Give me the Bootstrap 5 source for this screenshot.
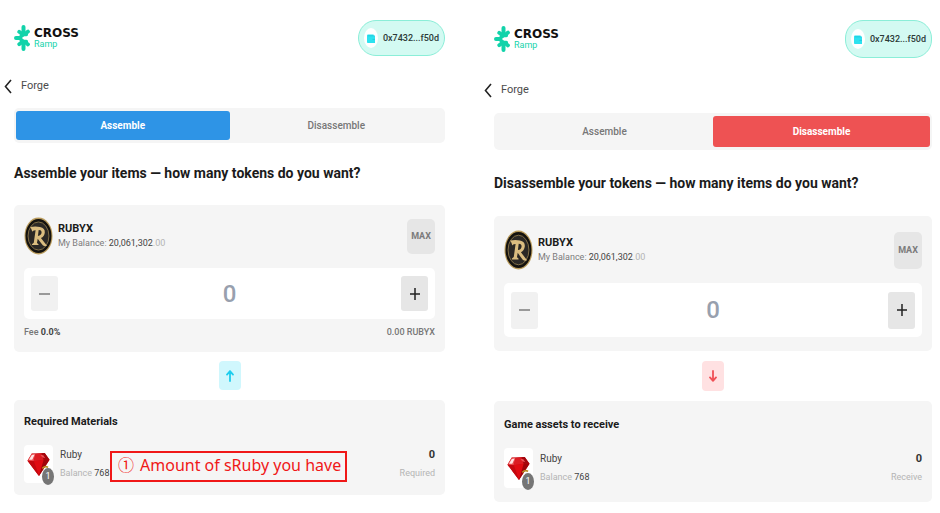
<!DOCTYPE html>
<html lang="en">
<head>
<meta charset="utf-8">
<meta name="viewport" content="width=device-width, initial-scale=1">
<title>CROSS Ramp – Forge</title>
<link href="https://cdn.jsdelivr.net/npm/bootstrap@5.3.0/dist/css/bootstrap.min.css" rel="stylesheet">
<style>
  body { font-family: Roboto, "Liberation Sans", sans-serif; font-size: 9px; line-height: 14px; color: #1b1b1b; background: #fff; }
  .forge-pair { display: grid; grid-template-columns: minmax(0, 445fr) minmax(0, 452fr); column-gap: 35px; padding-right: 8px; }
  .forge { --bar: 36px; --tabs: 35px; --token: 38px; --box: 51px; --step: 35px; --swap: 29px; --swap-gap: 9px; --above: 20px; --below: 12px; --lead: 19px; --drop: 21px; --pad: 12px; padding-top: 20px; }
  .forge-b { --bar: 38px; --tabs: 37px; --token: 40px; --box: 54px; --step: 37px; --swap: 30px; --swap-gap: 10px; --above: 22px; --below: 13px; --lead: 22px; --drop: 22px; --pad: 14px; }
  .forge-body { padding-left: 14px; }
  .topbar { height: var(--bar); }
  .brand-word { font: 700 12px/12px "DejaVu Sans", sans-serif; color: #111; }
  .brand-sub { font-size: 9px; line-height: 11px; color: #16d3ac; }
  .wallet { height: 100%; padding: 0 5px; gap: 5px; border: 1px solid #8beed8; border-radius: 18px; background: #d3faf2; color: #2c3a38; font-weight: 500; }
  .wallet-dot { width: 14px; height: 20px; border-radius: 50%; background: #fff; }
  .back { display: flex; margin: var(--above) 0 var(--below) 4px; height: 20px; gap: 9px; color: #4b4b4b; font-size: 11px; }
  .tabs { height: var(--tabs); padding: 3px 2px; border-radius: 5px; background: #f5f5f5; }
  .tabs button { flex: 1 1 0; border: 0; border-radius: 3px; background: transparent; color: #777; font-size: 10px; font-weight: 500; }
  .tabs .on-blue { background: #2e94e6; color: #fff; font-weight: 700; }
  .tabs .on-red { background: #ee5253; color: #fff; font-weight: 700; }
  .ask { font-size: 14px; line-height: 22px; font-weight: 700; margin: var(--lead) 0 var(--drop); white-space: nowrap; }
  .panel { background: #f5f5f5; border-radius: 5px; padding: var(--pad) 10px; }
  .token { height: var(--token); gap: 5px; }
  .coin { width: 29px; height: 100%; }
  .token-name { font-size: 11px; font-weight: 700; }
  .muted { color: #7c7c7c; }
  .faint { color: #b4b4b4; }
  .dark { color: #444; }
  .max { width: 28px; height: var(--step); border: 0; border-radius: 5px; background: #e6e6e6; color: #7b7b7b; font-size: 9px; font-weight: 700; padding: 0; }
  .amount { height: var(--box); margin-top: 13px; padding: 0 7px; border-radius: 5px; background: #fff; }
  .amount input { flex: 1 1 0; min-width: 0; height: 36px; border: 0; background: transparent; text-align: center; color: #98a0ae; font-size: 24px; font-weight: 500; padding: 0; }
  .step { width: 27px; height: var(--step); border: 0; border-radius: 3px; background: #e6e6e6; padding: 0; display: flex; align-items: center; justify-content: center; }
  .step:disabled { background: #f1f1f1; }
  .fee { margin-top: 5px; line-height: 16px; color: #777; font-weight: 500; }
  .swap { width: 22px; height: var(--swap); margin: var(--swap-gap) auto 10px; border: 0; border-radius: 4px; padding: 0; display: flex; align-items: center; justify-content: center; background: #d0f7fd; }
  .forge-b .swap { background: #ffe1e2; }
  .panel-title { font-size: 11px; line-height: 20px; font-weight: 700; margin: 0 0 13px; }
  .asset { height: var(--token); gap: 7px; }
  .tile { width: 29px; height: 100%; border-radius: 4px; background: #fff; }
  .count { left: 18px; bottom: -2px; width: 12px; height: 17px; border-radius: 50%; background: #757575; color: #fff; line-height: 17px; text-align: center; }
  .asset-text { line-height: 18px; }
  .asset-name { font-size: 10px; }
  .need { font-size: 11px; font-weight: 700; color: #333; }
  .callout { left: 86px; top: 6px; height: 31px; padding: 0 4px 4px 6px; gap: 6px; border: 2px solid #f01818; color: #f01818; font: 16px/20px "Noto Sans", "Noto Sans CJK KR", sans-serif; white-space: nowrap; }
</style>
<script src="https://cdn.jsdelivr.net/npm/bootstrap@5.3.0/dist/js/bootstrap.bundle.min.js"></script>
</head>
<body>
<svg class="d-none" aria-hidden="true">
  <symbol id="i-cross" viewBox="0 0 16 26" preserveAspectRatio="none">
    <g stroke="#12d3aa" stroke-linecap="round" stroke-linejoin="round" fill="none">
      <path d="M9.5 2v6M9.5 18v6M2 13H6" stroke-width="4"/>
      <path d="M5.2 6.8L9 9.6M14 6.6L11 9M5.2 19.2L9 16.4M14 19.4L11 17" stroke-width="3.8"/>
      <path d="M12.4 9.6H9.6Q6.6 10.4 6.6 13t3 3.4h2.8" stroke-width="3.4"/>
    </g>
  </symbol>
  <symbol id="i-wallet" viewBox="0 0 8 9" preserveAspectRatio="none">
    <path d="M1 .5h5.6v1.3H8V9H.8Q0 9 0 8V1.5Q0 .5 1 .5z" fill="#2de2ef"/><path d="M1 1.8h6.5M5.5 5.4H8" stroke="#19c6dc" stroke-width=".8"/>
  </symbol>
  <symbol id="i-coin" viewBox="0 0 30 40" preserveAspectRatio="none">
    <ellipse cx="15" cy="20" rx="14.5" ry="19.5" fill="#b99b5c"/>
    <ellipse cx="15" cy="20" rx="13.4" ry="18" fill="#14120f"/>
    <ellipse cx="15" cy="20" rx="10.8" ry="14.8" fill="#2b2825" stroke="#8f7a4d" stroke-width=".9"/>
    <path d="M6.5 10.5Q12 9.5 16.5 10.5Q22 11.5 21.5 16.5Q21 20.5 17.5 22.2L23.8 30.3Q20 31.8 18 28L14.2 22.8L13.4 27.3L15 28.6V29.6H8.2V28.6L10.1 27L12 14Q9 13.8 8.6 15.6Q7.8 12.5 6.5 10.5zM15.2 13.8L14.4 20Q18 19.4 18.2 16.4Q18.2 13.7 15.2 13.8z" fill="#dbbd80" fill-rule="evenodd"/>
  </symbol>
  <symbol id="i-ruby" viewBox="0 0 24 26" preserveAspectRatio="none">
    <path d="M5 1.5L18.5 1L23.5 8L12.5 25L.5 9z" fill="#c50d14"/>
    <path d="M5 1.5L9 2L7 9.5L.5 9z" fill="#e9474b"/><path d="M5 3L8 2.5L5.5 8L2 8z" fill="#ffe3e3"/>
    <path d="M9 2L15 1.2L17.5 8L7 9.5z" fill="#dc1b22"/><path d="M15 1.2L18.5 1L23.5 8L17.5 8z" fill="#a3060d"/>
    <path d="M7 9.5L17.5 8L12.5 25z" fill="#e00b12"/><path d="M17.5 8L23.5 8L12.5 25z" fill="#a0040a"/>
    <path d="M.5 9L7 9.5L12.5 25z" fill="#c4070e"/><path d="M14 3l3 .5 2 3-3-1z" fill="#ec5559"/>
    <path d="M16 17q3-3 6-1" stroke="#b98b24" stroke-width="1.6" fill="none"/>
  </symbol>
</svg>

<main class="forge-pair">
  <section class="forge" aria-label="Assemble">
    <header class="forge-body topbar d-flex align-items-center justify-content-between">
      <div class="d-flex align-items-center gap-1">
        <svg width="16" height="26" aria-hidden="true"><use href="#i-cross"/></svg>
        <div><div class="brand-word">CROSS</div><div class="brand-sub">Ramp</div></div>
      </div>
      <button type="button" class="wallet d-flex align-items-center"><span class="wallet-dot d-flex align-items-center justify-content-center"><svg width="8" height="9" aria-hidden="true"><use href="#i-wallet"/></svg></span>0x7432...f50d</button>
    </header>
    <a href="#" class="back align-items-center text-decoration-none"><svg width="8" height="15" viewBox="0 0 8 15" fill="none" stroke="#222" stroke-width="1.6" aria-hidden="true"><path d="M7 1L1.5 7.5L7 14"/></svg>Forge</a>
    <div class="forge-body">
      <div class="tabs d-flex"><button type="button" class="on-blue">Assemble</button><button type="button">Disassemble</button></div>
      <h1 class="ask">Assemble your items — how many tokens do you want?</h1>
      <div class="panel">
        <div class="token d-flex align-items-center">
          <svg class="coin" aria-hidden="true"><use href="#i-coin"/></svg>
          <div class="flex-grow-1"><div class="token-name">RUBYX</div><div class="muted">My Balance: <span class="dark">20,061,302</span><span class="faint">.00</span></div></div>
          <button type="button" class="max">MAX</button>
        </div>
        <div class="amount d-flex align-items-center">
          <button type="button" class="step" disabled aria-label="Decrease"><svg width="11" height="14" viewBox="0 0 11 14" stroke="#999" stroke-width="2" aria-hidden="true"><path d="M0 7h11"/></svg></button>
          <label class="visually-hidden" for="amt-a">Amount to assemble</label><input id="amt-a" type="text" inputmode="decimal" value="0">
          <button type="button" class="step" aria-label="Increase"><svg width="10" height="14" viewBox="0 0 10 14" stroke="#222" stroke-width="1.5" aria-hidden="true"><path d="M0 7h10M5 1v12"/></svg></button>
        </div>
        <div class="fee d-flex justify-content-between"><span>Fee <b class="dark">0.0%</b></span><span>0.00 RUBYX</span></div>
      </div>
      <button type="button" class="swap" aria-label="Switch direction"><svg width="8" height="12" viewBox="0 0 8 12" fill="none" stroke="#1dcdee" stroke-width="1.8" stroke-linecap="round" stroke-linejoin="round" aria-hidden="true"><path d="M4 11V1.2M1 4.6L4 1.2L7 4.6"/></svg></button>
      <div class="panel">
        <h2 class="panel-title">Required Materials</h2>
        <div class="asset d-flex align-items-center position-relative">
          <div class="tile d-flex align-items-center justify-content-center"><svg width="23" height="25" aria-hidden="true"><use href="#i-ruby"/></svg></div>
          <span class="count position-absolute">1</span>
          <div class="asset-text flex-grow-1"><div class="asset-name dark">Ruby</div><div class="faint">Balance <span class="dark">768</span></div></div>
          <div class="asset-text text-end"><div class="need">0</div><div class="faint">Required</div></div>
          <div class="callout position-absolute d-flex align-items-center"><span>①</span><span>Amount of sRuby you have</span></div>
        </div>
      </div>
    </div>
  </section>

  <section class="forge forge-b" aria-label="Disassemble">
    <header class="forge-body topbar d-flex align-items-center justify-content-between">
      <div class="d-flex align-items-center gap-1">
        <svg width="16" height="26" aria-hidden="true"><use href="#i-cross"/></svg>
        <div><div class="brand-word">CROSS</div><div class="brand-sub">Ramp</div></div>
      </div>
      <button type="button" class="wallet d-flex align-items-center"><span class="wallet-dot d-flex align-items-center justify-content-center"><svg width="8" height="9" aria-hidden="true"><use href="#i-wallet"/></svg></span>0x7432...f50d</button>
    </header>
    <a href="#" class="back align-items-center text-decoration-none"><svg width="8" height="15" viewBox="0 0 8 15" fill="none" stroke="#222" stroke-width="1.6" aria-hidden="true"><path d="M7 1L1.5 7.5L7 14"/></svg>Forge</a>
    <div class="forge-body">
      <div class="tabs d-flex"><button type="button">Assemble</button><button type="button" class="on-red">Disassemble</button></div>
      <h1 class="ask">Disassemble your tokens — how many items do you want?</h1>
      <div class="panel">
        <div class="token d-flex align-items-center">
          <svg class="coin" aria-hidden="true"><use href="#i-coin"/></svg>
          <div class="flex-grow-1"><div class="token-name">RUBYX</div><div class="muted">My Balance: <span class="dark">20,061,302</span><span class="faint">.00</span></div></div>
          <button type="button" class="max">MAX</button>
        </div>
        <div class="amount d-flex align-items-center">
          <button type="button" class="step" disabled aria-label="Decrease"><svg width="11" height="14" viewBox="0 0 11 14" stroke="#999" stroke-width="2" aria-hidden="true"><path d="M0 7h11"/></svg></button>
          <label class="visually-hidden" for="amt-b">Amount to disassemble</label><input id="amt-b" type="text" inputmode="decimal" value="0">
          <button type="button" class="step" aria-label="Increase"><svg width="10" height="14" viewBox="0 0 10 14" stroke="#222" stroke-width="1.5" aria-hidden="true"><path d="M0 7h10M5 1v12"/></svg></button>
        </div>
      </div>
      <button type="button" class="swap" aria-label="Switch direction"><svg width="8" height="12" viewBox="0 0 8 12" fill="none" stroke="#f04f55" stroke-width="1.8" stroke-linecap="round" stroke-linejoin="round" aria-hidden="true"><path d="M4 1V10.8M1 7.4L4 10.8L7 7.4"/></svg></button>
      <div class="panel">
        <h2 class="panel-title">Game assets to receive</h2>
        <div class="asset d-flex align-items-center position-relative">
          <div class="tile d-flex align-items-center justify-content-center"><svg width="23" height="25" aria-hidden="true"><use href="#i-ruby"/></svg></div>
          <span class="count position-absolute">1</span>
          <div class="asset-text flex-grow-1"><div class="asset-name dark">Ruby</div><div class="faint">Balance <span class="dark">768</span></div></div>
          <div class="asset-text text-end"><div class="need">0</div><div class="faint">Receive</div></div>
        </div>
      </div>
    </div>
  </section>
</main>
</body>
</html>
